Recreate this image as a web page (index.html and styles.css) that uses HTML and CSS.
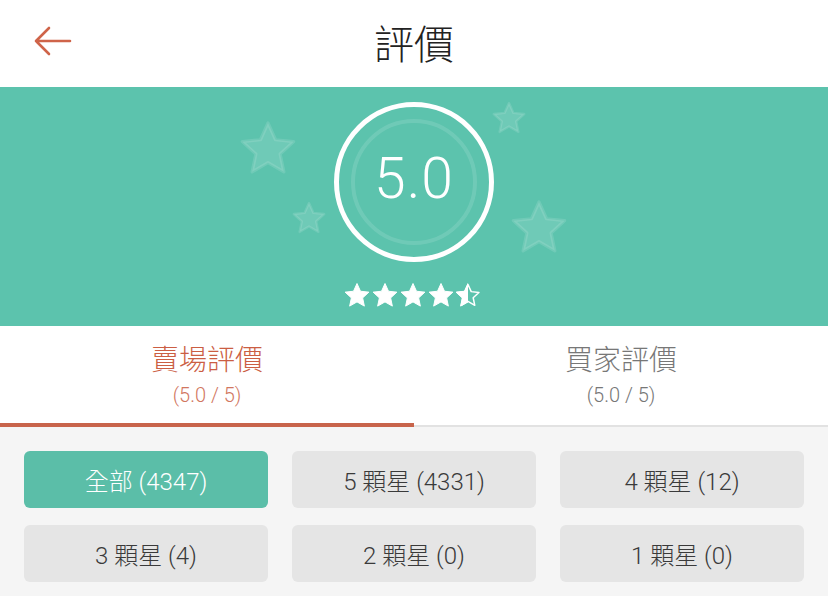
FILE: index.html
```html
<!DOCTYPE html>
<html>
<head>
  <title>評價</title>
  <link rel="stylesheet" href="styles.css">
</head>
<body>
  <div class="header">
    <svg class="back" width="40" height="30" viewBox="0 0 40 30">
      <path d="M38 15 H4 M17 2 L4 15 L17 28" fill="none" stroke="#cf6449" stroke-width="2.6" stroke-linecap="round" stroke-linejoin="round"/>
    </svg>
    <h1>評價</h1>
  </div>

  <div class="banner">
    <svg class="bg-stars" width="828" height="239" viewBox="0 0 828 239">
      <defs>
        <path id="star" d="M0 -1 L0.28 -0.38 L0.951 -0.309 L0.45 0.15 L0.588 0.809 L0 0.47 L-0.588 0.809 L-0.45 0.15 L-0.951 -0.309 L-0.28 -0.38 Z"/>
      </defs>
      <g fill="#ffffff" fill-opacity="0.12" stroke="#ffffff" stroke-opacity="0.12" stroke-linejoin="round">
        <use href="#star" transform="translate(268 63) scale(27)" stroke-width="0.12"/>
        <use href="#star" transform="translate(309 132) scale(16)" stroke-width="0.15"/>
        <use href="#star" transform="translate(509 32) scale(16)" stroke-width="0.15"/>
        <use href="#star" transform="translate(539 142) scale(27)" stroke-width="0.12"/>
      </g>
    </svg>
    <div class="score-ring">
      <span class="score">5.0</span>
    </div>
    <div class="stars">
      <svg width="140" height="26" viewBox="0 0 140 26">
        <defs>
          <path id="s" d="M0 -1 L0.28 -0.38 L0.951 -0.309 L0.45 0.15 L0.588 0.809 L0 0.47 L-0.588 0.809 L-0.45 0.15 L-0.951 -0.309 L-0.28 -0.38 Z"/>
          <clipPath id="half"><rect x="110" y="0" width="14" height="26"/></clipPath>
        </defs>
        <g fill="#ffffff" stroke="#ffffff" stroke-width="0.08" stroke-linejoin="round">
          <use href="#s" transform="translate(13 14) scale(12.5)"/>
          <use href="#s" transform="translate(41 14) scale(12.5)"/>
          <use href="#s" transform="translate(69 14) scale(12.5)"/>
          <use href="#s" transform="translate(97 14) scale(12.5)"/>
          <g clip-path="url(#half)">
            <use href="#s" transform="translate(124 14) scale(12.5)"/>
          </g>
          <use href="#s" transform="translate(124 14) scale(11.5)" fill="none" stroke-width="0.13"/>
        </g>
      </svg>
    </div>
  </div>

  <div class="tabs">
    <div class="tab active">
      <div class="tab-title">賣場評價</div>
      <div class="tab-sub">(5.0 / 5)</div>
    </div>
    <div class="tab">
      <div class="tab-title">買家評價</div>
      <div class="tab-sub">(5.0 / 5)</div>
    </div>
  </div>

  <div class="filters">
    <button class="chip selected">全部 (4347)</button>
    <button class="chip">5 顆星 (4331)</button>
    <button class="chip">4 顆星 (12)</button>
    <button class="chip">3 顆星 (4)</button>
    <button class="chip">2 顆星 (0)</button>
    <button class="chip">1 顆星 (0)</button>
  </div>
</body>
</html>
```

FILE: styles.css
```css
body {
  margin: 0;
  width: 828px;
  height: 596px;
  overflow: hidden;
  background: #f5f5f5;
  font-family: Roboto, "Noto Sans CJK TC", sans-serif;
}
.header {
  height: 87px;
  background: white;
  display: flex;
  align-items: center;
  justify-content: center;
  position: relative;
}
.back {
  position: absolute;
  left: 32px;
  top: 26px;
}
.header h1 {
  margin: 0 0 4px;
  font-size: 40px;
  font-weight: 300;
  color: #222;
}
.banner {
  height: 239px;
  background: #5cc3ad;
  display: flex;
  flex-direction: column;
  align-items: center;
  position: relative;
  overflow: hidden;
}
.bg-stars {
  position: absolute;
  left: 0;
  top: 0;
}
.score-ring {
  margin-top: 15px;
  width: 150px;
  height: 150px;
  border: 5px solid white;
  border-radius: 50%;
  display: flex;
  align-items: center;
  justify-content: center;
  position: relative;
}
.score-ring::before {
  content: "";
  position: absolute;
  left: 12px;
  top: 12px;
  right: 12px;
  bottom: 12px;
  border: 4px solid rgba(255,255,255,0.12);
  border-radius: 50%;
}
.score {
  color: white;
  font-size: 57px;
  font-weight: 300;
  letter-spacing: 1px;
  margin-top: -8px;
}
.stars {
  margin-top: 20px;
  line-height: 0;
}
.tabs {
  display: flex;
  background: white;
  height: 101px;
}
.tab {
  flex: 1;
  display: flex;
  flex-direction: column;
  align-items: center;
  padding-top: 17px;
  box-sizing: border-box;
  border-bottom: 2px solid #e2e2e2;
  color: #777;
}
.tab.active {
  border-bottom: 4px solid #c8644b;
  color: #cb5e43;
}
.tab-title {
  font-size: 28px;
  line-height: 36px;
  font-weight: 300;
}
.tab-sub {
  font-size: 20px;
  line-height: 26px;
  margin-top: 3px;
  font-weight: 300;
}
.tab.active .tab-sub {
  color: #d1775f;
}
.filters {
  display: grid;
  grid-template-columns: repeat(3, 244px);
  gap: 17px 24px;
  padding: 24px;
}
.chip {
  height: 57px;
  border: none;
  border-radius: 6px;
  background: #e5e5e5;
  color: #3a3a3a;
  font-family: Roboto, "Noto Sans CJK TC", sans-serif;
  font-size: 24px;
  font-weight: 300;
}
.chip.selected {
  background: #5bbea8;
  color: white;
}
```
